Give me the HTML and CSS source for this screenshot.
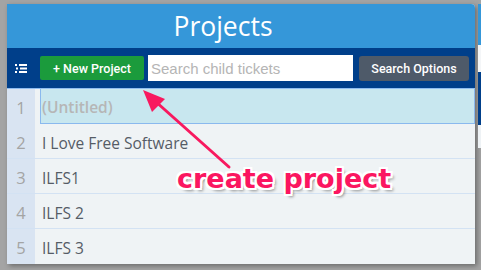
FILE: index.html
```html
<!DOCTYPE html>
<html lang="en">
<head>
    <meta charset="UTF-8">
    <title>Projects</title>
    <link rel="stylesheet" href="styles.css">
</head>
<body>
    <div class="screen">
        <div class="panel">
            <div class="panel-header">Projects</div>
            <div class="toolbar">
                <svg class="list-icon" width="12" height="9" viewBox="0 0 12 9">
                    <rect x="0" y="0" width="2" height="2" fill="#fff"/>
                    <rect x="4" y="0" width="8" height="2" fill="#fff"/>
                    <rect x="1" y="3.5" width="2" height="2" fill="#fff"/>
                    <rect x="5" y="3.5" width="7" height="2" fill="#fff"/>
                    <rect x="0" y="7" width="2" height="2" fill="#fff"/>
                    <rect x="4" y="7" width="8" height="2" fill="#fff"/>
                </svg>
                <button class="btn btn-new">+ New Project</button>
                <input class="search" type="text" placeholder="Search child tickets">
                <button class="btn btn-options">Search Options</button>
            </div>
            <div class="rows">
                <div class="row selected"><span class="num">1</span><span class="cell">(Untitled)</span></div>
                <div class="row"><span class="num">2</span><span class="cell">I Love Free Software</span></div>
                <div class="row"><span class="num">3</span><span class="cell">ILFS1</span></div>
                <div class="row"><span class="num">4</span><span class="cell">ILFS 2</span></div>
                <div class="row"><span class="num">5</span><span class="cell">ILFS 3</span></div>
            </div>
        </div>
        <div class="side-panel">
            <div class="side-blue"></div>
            <div class="side-white"></div>
            <div class="side-dark"></div>
            <div class="side-light"></div>
        </div>
    </div>

    <!-- annotation -->
    <svg class="arrow" width="481" height="270" viewBox="0 0 481 270">
        <line x1="229" y1="167" x2="155" y2="101" stroke="#f8195f" stroke-width="3" stroke-linecap="round"/>
        <polygon points="143,90 165,99 152,112" fill="#f8195f"/>
    </svg>
    <div class="callout">create project</div>
</body>
</html>
```

FILE: styles.css
```css
body {
    margin: 0;
    background-color: #a4a4a4;
    font-family: 'Open Sans', sans-serif;
}
.screen {
    display: flex;
    align-items: flex-start;
    padding: 4px 0 0 7px;
    height: 266px;
    overflow: hidden;
}
.panel {
    width: 468px;
    height: 260px;
    background: #eff3f5;
    border-radius: 0 4px 0 0;
    box-shadow: 2px 2px 5px rgba(0,0,0,0.35);
    overflow: hidden;
    flex-shrink: 0;
}
.panel-header {
    height: 44px;
    background-color: #3597d9;
    color: white;
    font-size: 26.5px;
    line-height: 44px;
    text-align: center;
    padding-right: 36px;
}
.toolbar {
    height: 40px;
    background-color: #003f8a;
    display: flex;
    align-items: center;
    padding-left: 8px;
    box-sizing: border-box;
}
.list-icon {
    margin: 0 13px 0 0;
}
.btn {
    font-family: 'Roboto', sans-serif;
    font-weight: 500;
    color: white;
    border: none;
    border-radius: 2px;
    font-size: 12.5px;
    height: 24px;
    padding: 0;
}
.btn-new {
    width: 104px;
    background-color: #1b9b3c;
}
.search {
    width: 205px;
    height: 26px;
    margin-left: 4px;
    border: none;
    padding: 0 3px;
    box-sizing: border-box;
    font-family: 'Liberation Sans', sans-serif;
    font-size: 15px;
}
.search::placeholder {
    color: #b5b5b5;
}
.btn-options {
    width: 110px;
    height: 25px;
    margin-left: 6px;
    background-color: #4e5a69;
    border-radius: 3px;
}
.rows {
    border-top: 1px solid #8fbdf0;
}
.row {
    display: flex;
    height: 35px;
    border-bottom: 1px solid #d3e2f3;
    box-sizing: border-box;
}
.row:last-child {
    border-bottom: none;
}
.num {
    width: 28px;
    padding-top: 4px;
    background-color: #d9e4f2;
    color: #a4a4a4;
    font-size: 16.5px;
    text-align: center;
    line-height: 30px;
    flex-shrink: 0;
}
.cell {
    flex: 1;
    padding: 4px 0 0 7px;
    color: #555c66;
    font-size: 15.5px;
    line-height: 30px;
}
.selected {
    border-bottom: none;
}
.selected .cell {
    margin-left: 5px;
    padding-left: 1px;
    background-color: #c8e7ef;
    border: 1px solid #8ab9ee;
    border-top: none;
    color: #b6b6b6;
    font-weight: 600;
    line-height: 29px;
}
.side-panel {
    margin-left: 3px;
    width: 10px;
    flex-shrink: 0;
}
.side-blue {
    height: 41px;
    background-color: #3597d9;
}
.side-white {
    height: 27px;
    background-color: #f4f6f8;
}
.side-dark {
    height: 53px;
    background-color: #003f8a;
}
.side-light {
    height: 23px;
    background-color: #eef2f5;
}
.arrow {
    position: absolute;
    top: 0;
    left: 0;
}
.callout {
    position: absolute;
    left: 177px;
    top: 163px;
    font-family: 'DejaVu Sans', sans-serif;
    font-weight: bold;
    font-size: 27px;
    color: #fb1660;
    text-shadow: -2px -2px 0 #fff, 2px -2px 0 #fff, -2px 2px 0 #fff, 2px 2px 0 #fff,
                 0 -2px 0 #fff, 0 2px 0 #fff, -2px 0 0 #fff, 2px 0 0 #fff,
                 3px 3px 3px rgba(0,0,0,0.4);
}
```
